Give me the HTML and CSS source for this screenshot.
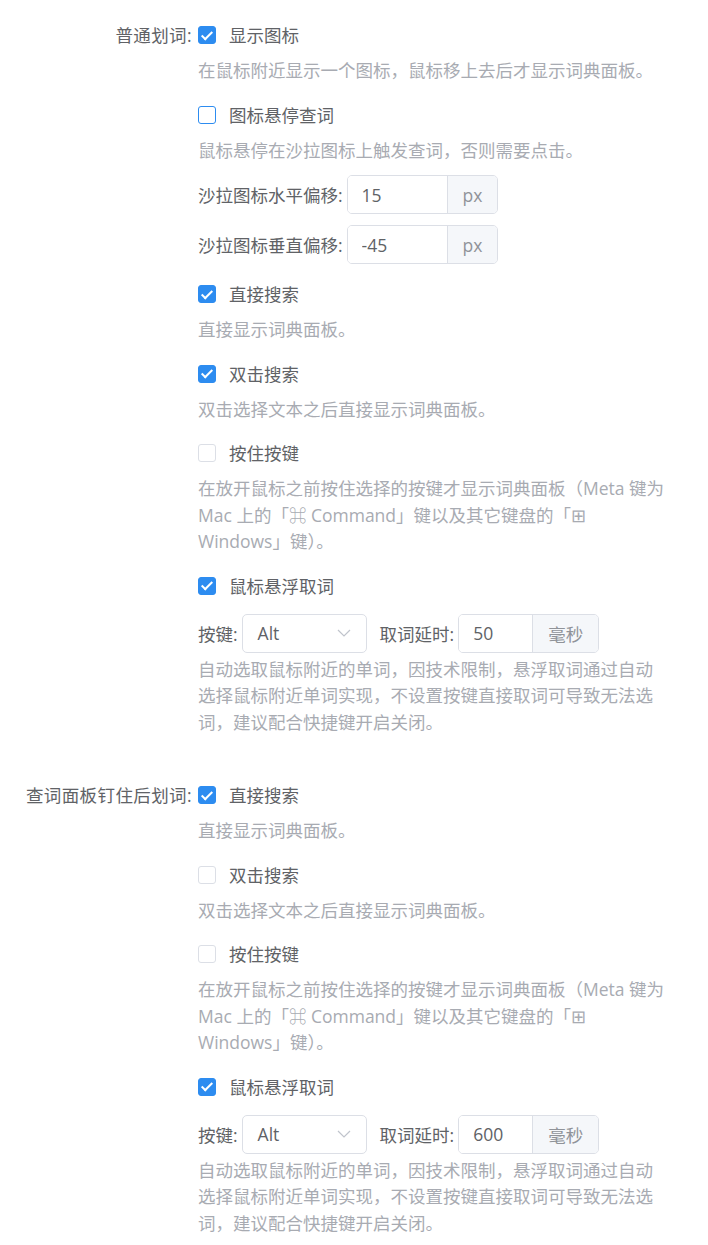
FILE: index.html
```html
<!DOCTYPE html>
<html lang="zh-CN">
<head>
    <meta charset="UTF-8">
    <meta name="viewport" content="width=device-width, initial-scale=1.0">
    <title>划词设置</title>
    <link rel="stylesheet" href="styles.css">
</head>
<body>

    <div class="form">

        <!-- 普通划词 -->
        <div class="form-item">
            <div class="form-label">普通划词:</div>
            <div class="form-content">
                <div class="option">
                    <label class="checkbox checked"><span class="box"></span><span class="text">显示图标</span></label>
                    <p class="desc">在鼠标附近显示一个图标，鼠标移上去后才显示词典面板。</p>
                </div>
                <div class="option">
                    <label class="checkbox focused"><span class="box"></span><span class="text">图标悬停查词</span></label>
                    <p class="desc">鼠标悬停在沙拉图标上触发查词，否则需要点击。</p>
                </div>
                <div class="input-row">
                    <span class="row-label">沙拉图标水平偏移:</span>
                    <div class="input-group">
                        <input class="input wide" type="text" value="15">
                        <span class="append">px</span>
                    </div>
                </div>
                <div class="input-row">
                    <span class="row-label">沙拉图标垂直偏移:</span>
                    <div class="input-group">
                        <input class="input wide" type="text" value="-45">
                        <span class="append">px</span>
                    </div>
                </div>
                <div class="option">
                    <label class="checkbox checked"><span class="box"></span><span class="text">直接搜索</span></label>
                    <p class="desc">直接显示词典面板。</p>
                </div>
                <div class="option">
                    <label class="checkbox checked"><span class="box"></span><span class="text">双击搜索</span></label>
                    <p class="desc">双击选择文本之后直接显示词典面板。</p>
                </div>
                <div class="option">
                    <label class="checkbox"><span class="box"></span><span class="text">按住按键</span></label>
                    <p class="desc">在放开鼠标之前按住选择的按键才显示词典面板（Meta 键为 Mac 上的「⌘ Command」键以及其它键盘的「⊞ Windows」键）。</p>
                </div>
                <div class="option">
                    <label class="checkbox checked"><span class="box"></span><span class="text">鼠标悬浮取词</span></label>
                    <div class="hover-row">
                        <span class="row-label">按键:</span>
                        <div class="select">
                            <span>Alt</span>
                            <svg class="arrow" width="14" height="8" viewBox="0 0 14 8"><path d="M1 1l6 6 6-6" fill="none" stroke="#c0c4cc" stroke-width="1.2"/></svg>
                        </div>
                        <span class="row-label delay">取词延时:</span>
                        <div class="input-group">
                            <input class="input narrow" type="text" value="50">
                            <span class="append">毫秒</span>
                        </div>
                    </div>
                    <p class="desc tight">自动选取鼠标附近的单词，因技术限制，悬浮取词通过自动选择鼠标附近单词实现，不设置按键直接取词可导致无法选词，建议配合快捷键开启关闭。</p>
                </div>
            </div>
        </div>

        <!-- 查词面板钉住后划词 -->
        <div class="form-item">
            <div class="form-label">查词面板钉住后划词:</div>
            <div class="form-content">
                <div class="option">
                    <label class="checkbox checked"><span class="box"></span><span class="text">直接搜索</span></label>
                    <p class="desc">直接显示词典面板。</p>
                </div>
                <div class="option">
                    <label class="checkbox"><span class="box"></span><span class="text">双击搜索</span></label>
                    <p class="desc">双击选择文本之后直接显示词典面板。</p>
                </div>
                <div class="option">
                    <label class="checkbox"><span class="box"></span><span class="text">按住按键</span></label>
                    <p class="desc">在放开鼠标之前按住选择的按键才显示词典面板（Meta 键为 Mac 上的「⌘ Command」键以及其它键盘的「⊞ Windows」键）。</p>
                </div>
                <div class="option">
                    <label class="checkbox checked"><span class="box"></span><span class="text">鼠标悬浮取词</span></label>
                    <div class="hover-row">
                        <span class="row-label">按键:</span>
                        <div class="select">
                            <span>Alt</span>
                            <svg class="arrow" width="14" height="8" viewBox="0 0 14 8"><path d="M1 1l6 6 6-6" fill="none" stroke="#c0c4cc" stroke-width="1.2"/></svg>
                        </div>
                        <span class="row-label delay">取词延时:</span>
                        <div class="input-group">
                            <input class="input narrow" type="text" value="600">
                            <span class="append">毫秒</span>
                        </div>
                    </div>
                    <p class="desc tight">自动选取鼠标附近的单词，因技术限制，悬浮取词通过自动选择鼠标附近单词实现，不设置按键直接取词可导致无法选词，建议配合快捷键开启关闭。</p>
                </div>
            </div>
        </div>

    </div>

</body>
</html>
```

FILE: styles.css
```css
body {
    font-family: "Open Sans", "Noto Sans CJK SC", sans-serif;
    font-size: 17.5px;
    color: #606266;
    background-color: #fff;
    margin: 0;
    padding: 16px 0 0;
}
.form-item {
    display: flex;
    margin-bottom: 29px;
}
.form-label {
    width: 192px;
    flex-shrink: 0;
    text-align: right;
    line-height: 22px;
    padding-top: 8px;
    letter-spacing: 0.4px;
}
.form-content {
    margin-left: 6px;
    width: 468px;
}
.option {
    padding-top: 8px;
    margin-bottom: 12px;
}
.checkbox {
    display: flex;
    align-items: center;
    height: 22px;
    line-height: 22px;
    margin-bottom: 11px;
}
.checkbox .box {
    position: relative;
    width: 18px;
    height: 18px;
    box-sizing: border-box;
    border: 1px solid #dcdfe6;
    border-radius: 3px;
    background-color: #fff;
}
.checkbox.focused .box {
    border-color: #2d8cf0;
}
.checkbox.checked .box {
    background-color: #2d8cf0;
    border-color: #2d8cf0;
}
.checkbox.checked .box::after {
    content: "";
    position: absolute;
    left: 5px;
    top: 1.5px;
    width: 4px;
    height: 9px;
    border: solid #fff;
    border-width: 0 2.5px 2.5px 0;
    transform: rotate(45deg);
}
.checkbox .text {
    margin-left: 13px;
}
.desc {
    margin: 0;
    color: #a8abb2;
    line-height: 26.5px;
}
.desc.tight {
    margin-top: 3px;
}
.input-row {
    display: flex;
    align-items: center;
    margin-bottom: 11px;
}
.row-label {
    margin-right: 4px;
}
.input-group {
    display: flex;
    height: 39px;
    box-sizing: border-box;
    border: 1px solid #dcdfe6;
    border-radius: 5px;
    overflow: hidden;
}
.input {
    border: none;
    outline: none;
    padding: 0 0 0 14px;
    font-family: inherit;
    font-size: 17.5px;
    color: #606266;
    box-sizing: border-box;
}
.input.wide {
    width: 99px;
}
.input.narrow {
    width: 73px;
}
.append {
    display: flex;
    align-items: center;
    padding: 0 15px;
    background-color: #f5f7fa;
    border-left: 1px solid #dcdfe6;
    color: #909399;
}
.hover-row {
    display: flex;
    align-items: center;
    margin-top: 17px;
}
.select {
    display: flex;
    align-items: center;
    justify-content: space-between;
    width: 125px;
    height: 39px;
    box-sizing: border-box;
    border: 1px solid #dcdfe6;
    border-radius: 5px;
    padding: 0 15px;
}
.row-label.delay {
    margin-left: 13px;
}
```
